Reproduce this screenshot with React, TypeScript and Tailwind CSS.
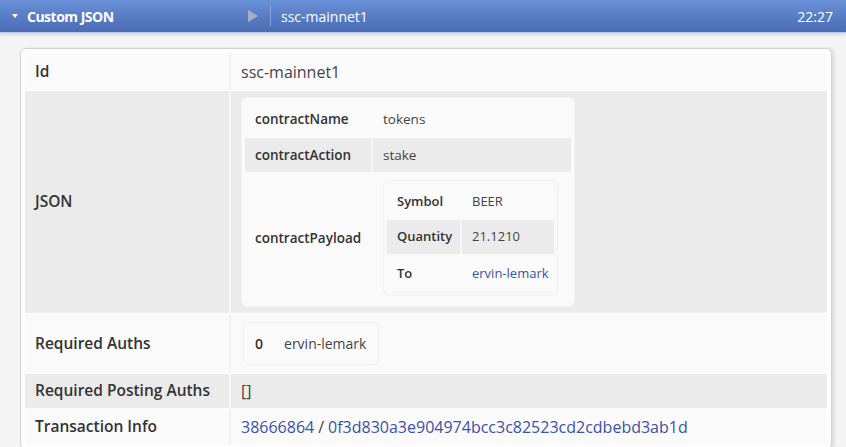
import React from "react";

const font = { fontFamily: '"Open Sans", "Noto Sans", sans-serif' };

function Row({ label, gray, children, h }: { label: string; gray?: boolean; children: React.ReactNode; h: string }) {
  return (
    <div className={`flex ${gray ? "bg-[#ebebeb]" : "bg-[#fafafa]"} ${h}`}>
      <div className="w-[204px] shrink-0 flex items-center pl-[10px] text-[15.5px] font-semibold text-[#333]">{label}</div>
      <div className={`flex-1 flex items-center px-[10px] text-[16px] text-[#444] whitespace-nowrap border-l-2 ${gray ? "border-[#f6f6f6]" : "border-[#f0f0f0]"}`}>
        {children}
      </div>
    </div>
  );
}

function SubRow({ label, gray, w, size, children, h }: { label: string; gray?: boolean; w: string; size: string; children: React.ReactNode; h: string }) {
  return (
    <div className={`flex ${gray ? "bg-[#ebebeb]" : "bg-[#fafafa]"} ${h}`}>
      <div className={`${w} shrink-0 flex items-center pl-[10px] ${size} font-semibold text-[#333]`}>{label}</div>
      <div className={`flex-1 flex items-center px-[10px] ${size} text-[#444] whitespace-nowrap border-l-2 ${gray ? "border-[#f6f6f6]" : "border-transparent"}`}>
        {children}
      </div>
    </div>
  );
}

export default function App() {
  return (
    <div className="w-[846px] h-[447px] overflow-hidden bg-[#f4f4f4]" style={font}>
      {/* header bar */}
      <div className="h-[33px] flex items-center bg-gradient-to-b from-[#6990d8] to-[#4a6cb4] border-b border-[#b3c9ec] shadow-[0_2px_3px_rgba(0,0,0,0.12)] text-white text-[14px]">
        <span className="ml-[12px] w-0 h-0 border-l-[3.5px] border-r-[3.5px] border-t-[4px] border-l-transparent border-r-transparent border-t-white" />
        <span className="ml-[9px] w-[221px] font-bold text-[14px] tracking-[-0.5px]">Custom JSON</span>
        <span className="w-0 h-0 border-t-[6px] border-b-[6px] border-l-[10px] border-t-transparent border-b-transparent border-l-[#a4afc2]" />
        <span className="ml-[12px] w-px h-[20px] bg-[#8aa3d2]" />
        <span className="ml-[10px]">ssc-mainnet1</span>
        <span className="ml-auto mr-[13px]">22:27</span>
      </div>

      {/* card */}
      <div className="ml-[20px] mr-[14px] mt-[15px] rounded-[6px] border border-[#d2d2d2] bg-[#fdfdfd] p-[4px] shadow-[3px_0_3px_rgba(0,0,0,0.08)]">
        <div className="flex flex-col gap-px">
          <Row label="Id" h="h-[37px]">ssc-mainnet1</Row>

          <Row label="JSON" gray h="h-[222px]">
            <div className="w-[334px] rounded-[6px] bg-[#fafafa] border border-[#f4f4f4] p-[3px] flex flex-col gap-px">
              <SubRow label="contractName" w="w-[126px]" size="text-[13.5px]" h="h-[36px]">tokens</SubRow>
              <SubRow label="contractAction" gray w="w-[126px]" size="text-[13.5px]" h="h-[34px]">stake</SubRow>
              <SubRow label="contractPayload" w="w-[126px]" size="text-[13.5px]" h="h-[130px]">
                <div className="w-[175px] rounded-[5px] bg-[#f8f8f8] border border-[#f2f2f2] p-[3px] flex flex-col gap-px">
                  <SubRow label="Symbol" w="w-[73px]" size="text-[13px]" h="h-[35px]">BEER</SubRow>
                  <SubRow label="Quantity" gray w="w-[73px]" size="text-[13px]" h="h-[34px]">21.1210</SubRow>
                  <SubRow label="To" w="w-[73px]" size="text-[13px]" h="h-[37px]">
                    <span className="text-[#3a52a3]">ervin-lemark</span>
                  </SubRow>
                </div>
              </SubRow>
            </div>
          </Row>

          <Row label="Required Auths" h="h-[59px]">
            <div className="ml-[2px] h-[43px] flex items-center rounded-[6px] bg-[#fafafa] border border-[#f1f1f1] shadow-[0_0_2px_rgba(0,0,0,0.04)] pl-[11px] pr-[12px] text-[14px]">
              <span className="font-semibold text-[#333]">0</span>
              <span className="ml-[21px] text-[#444]">ervin-lemark</span>
            </div>
          </Row>

          <Row label="Required Posting Auths" gray h="h-[34px]">[]</Row>

          <Row label="Transaction Info" h="h-[36px]">
            <span className="text-[#3a52a3]">38666864</span>
            <span className="mx-[4px] text-[#444]">/</span>
            <span className="text-[#3a52a3]">0f3d830a3e904974bcc3c82523cd2cdbebd3ab1d</span>
          </Row>
        </div>
      </div>
    </div>
  );
}
